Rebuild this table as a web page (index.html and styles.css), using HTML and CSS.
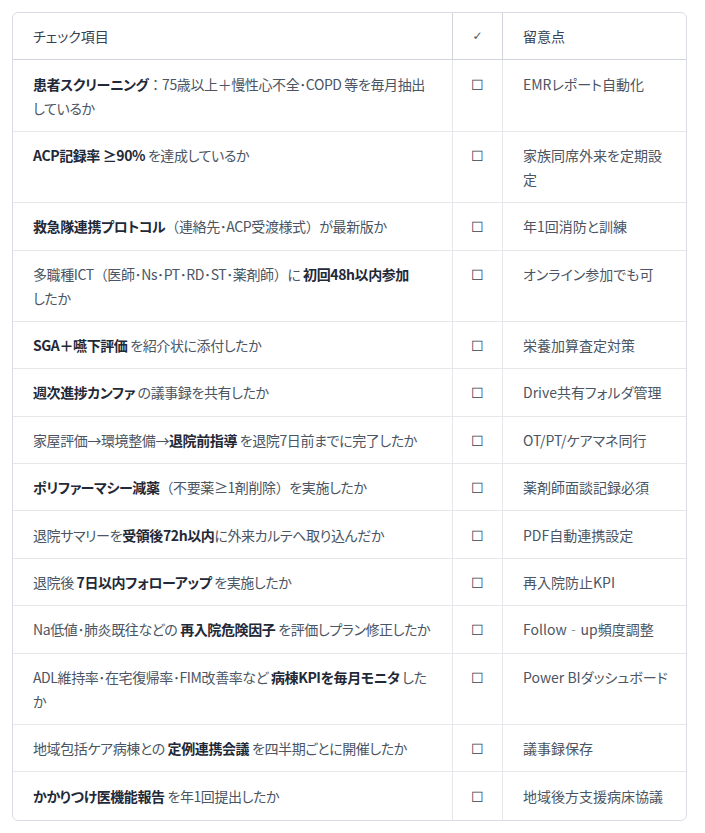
FILE: index.html
```html
<!DOCTYPE html>
<html lang="ja">
<head>
<meta charset="utf-8">
<link rel="stylesheet" href="styles.css">
</head>
<body>
<div class="wrap">
<table class="tbl">
<colgroup><col class="c1"><col class="c2"><col class="c3"></colgroup>
<thead>
<tr><th class="item">チェック項目</th><th class="chk"><span class="tick">✓</span></th><th class="note">留意点</th></tr>
</thead>
<tbody>
<tr><td class="item"><b>患者スクリーニング</b><span class="fw">：</span>75歳以上＋慢性心不全･COPD 等を毎月抽出しているか</td><td class="chk">☐</td><td class="note">EMRレポート自動化</td></tr>
<tr><td class="item"><b>ACP記録率 ≥90%</b> を達成しているか</td><td class="chk">☐</td><td class="note">家族同席外来を定期設定</td></tr>
<tr><td class="item"><b>救急隊連携プロトコル</b><span class="fw">（</span>連絡先･ACP受渡様式<span class="fw">）</span>が最新版か</td><td class="chk">☐</td><td class="note">年1回消防と訓練</td></tr>
<tr><td class="item">多職種ICT<span class="fw">（</span>医師･Ns･PT･RD･ST･薬剤師<span class="fw">）</span>に <b>初回48h以内参加</b><br>したか</td><td class="chk">☐</td><td class="note">オンライン参加でも可</td></tr>
<tr><td class="item"><b>SGA＋嚥下評価</b> を紹介状に添付したか</td><td class="chk">☐</td><td class="note">栄養加算査定対策</td></tr>
<tr><td class="item"><b>週次進捗カンファ</b> の議事録を共有したか</td><td class="chk">☐</td><td class="note">Drive共有フォルダ管理</td></tr>
<tr><td class="item">家屋評価→環境整備→<b>退院前指導</b> を退院7日前までに完了したか</td><td class="chk">☐</td><td class="note">OT/PT/ケアマネ同行</td></tr>
<tr><td class="item"><b>ポリファーマシー減薬</b><span class="fw">（</span>不要薬≥1剤削除<span class="fw">）</span>を実施したか</td><td class="chk">☐</td><td class="note">薬剤師面談記録必須</td></tr>
<tr><td class="item">退院サマリーを<b>受領後72h以内</b>に外来カルテへ取り込んだか</td><td class="chk">☐</td><td class="note">PDF自動連携設定</td></tr>
<tr><td class="item">退院後 <b>7日以内フォローアップ</b> を実施したか</td><td class="chk">☐</td><td class="note">再入院防止KPI</td></tr>
<tr><td class="item">Na低値･肺炎既往などの <b>再入院危険因子</b> を評価しプラン修正したか</td><td class="chk">☐</td><td class="note">Follow‐up頻度調整</td></tr>
<tr><td class="item">ADL維持率･在宅復帰率･FIM改善率など <b>病棟KPIを毎月モニタ</b> したか</td><td class="chk">☐</td><td class="note">Power BIダッシュボード</td></tr>
<tr><td class="item">地域包括ケア病棟との <b>定例連携会議</b> を四半期ごとに開催したか</td><td class="chk">☐</td><td class="note">議事録保存</td></tr>
<tr><td class="item"><b>かかりつけ医機能報告</b> を年1回提出したか</td><td class="chk">☐</td><td class="note">地域後方支援病床協議</td></tr>
</tbody>
</table>
</div>
</body>
</html>
```
FILE: styles.css
```css
html, body {
  margin: 0;
  padding: 0;
  background: #ffffff;
}
body {
  padding: 12px;
  font-family: "Noto Sans CJK JP", "Noto Sans", sans-serif;
  font-size: 14px;
  color: #4b5563;
  font-feature-settings: "palt" 1;
}
.fw {
  font-feature-settings: normal;
}
.wrap {
  width: 673px;
  border: 1px solid #d9dde3;
  border-radius: 6px;
  overflow: hidden;
}
.tbl {
  width: 673px;
  table-layout: fixed;
  border-collapse: separate;
  border-spacing: 0;
}
.c1 { width: 440px; }
.c2 { width: 50px; }
.c3 { width: 183px; }
.tbl th, .tbl td {
  box-sizing: border-box;
  padding: 11.2px 20px;
  line-height: 24px;
  height: 47.4px;
  text-align: left;
  vertical-align: top;
  border-bottom: 1px solid #e5e7eb;
  border-right: 1px solid #e5e7eb;
  word-break: break-all;
}
.tbl .item {
  padding-right: 16px;
  letter-spacing: -0.4px;
}
.tbl .note {
  padding-right: 12px;
}
.tbl th:last-child, .tbl td:last-child {
  border-right: none;
}
.tbl tbody tr:last-child td {
  border-bottom: none;
}
.tbl th {
  font-weight: 400;
  color: #374151;
  border-bottom-color: #d1d5db;
  border-right-color: #d1d5db;
}
.tbl th.item {
  letter-spacing: 0;
}
.tbl .chk {
  text-align: center;
  padding-left: 0;
  padding-right: 0;
  color: #374151;
}
.tick {
  display: inline-block;
  font-family: "DejaVu Sans", sans-serif;
  font-size: 12px;
  line-height: 24px;
  height: 24px;
  vertical-align: top;
  color: #4b5563;
}
.tbl b {
  font-weight: 700;
  color: #1f2937;
}
```
